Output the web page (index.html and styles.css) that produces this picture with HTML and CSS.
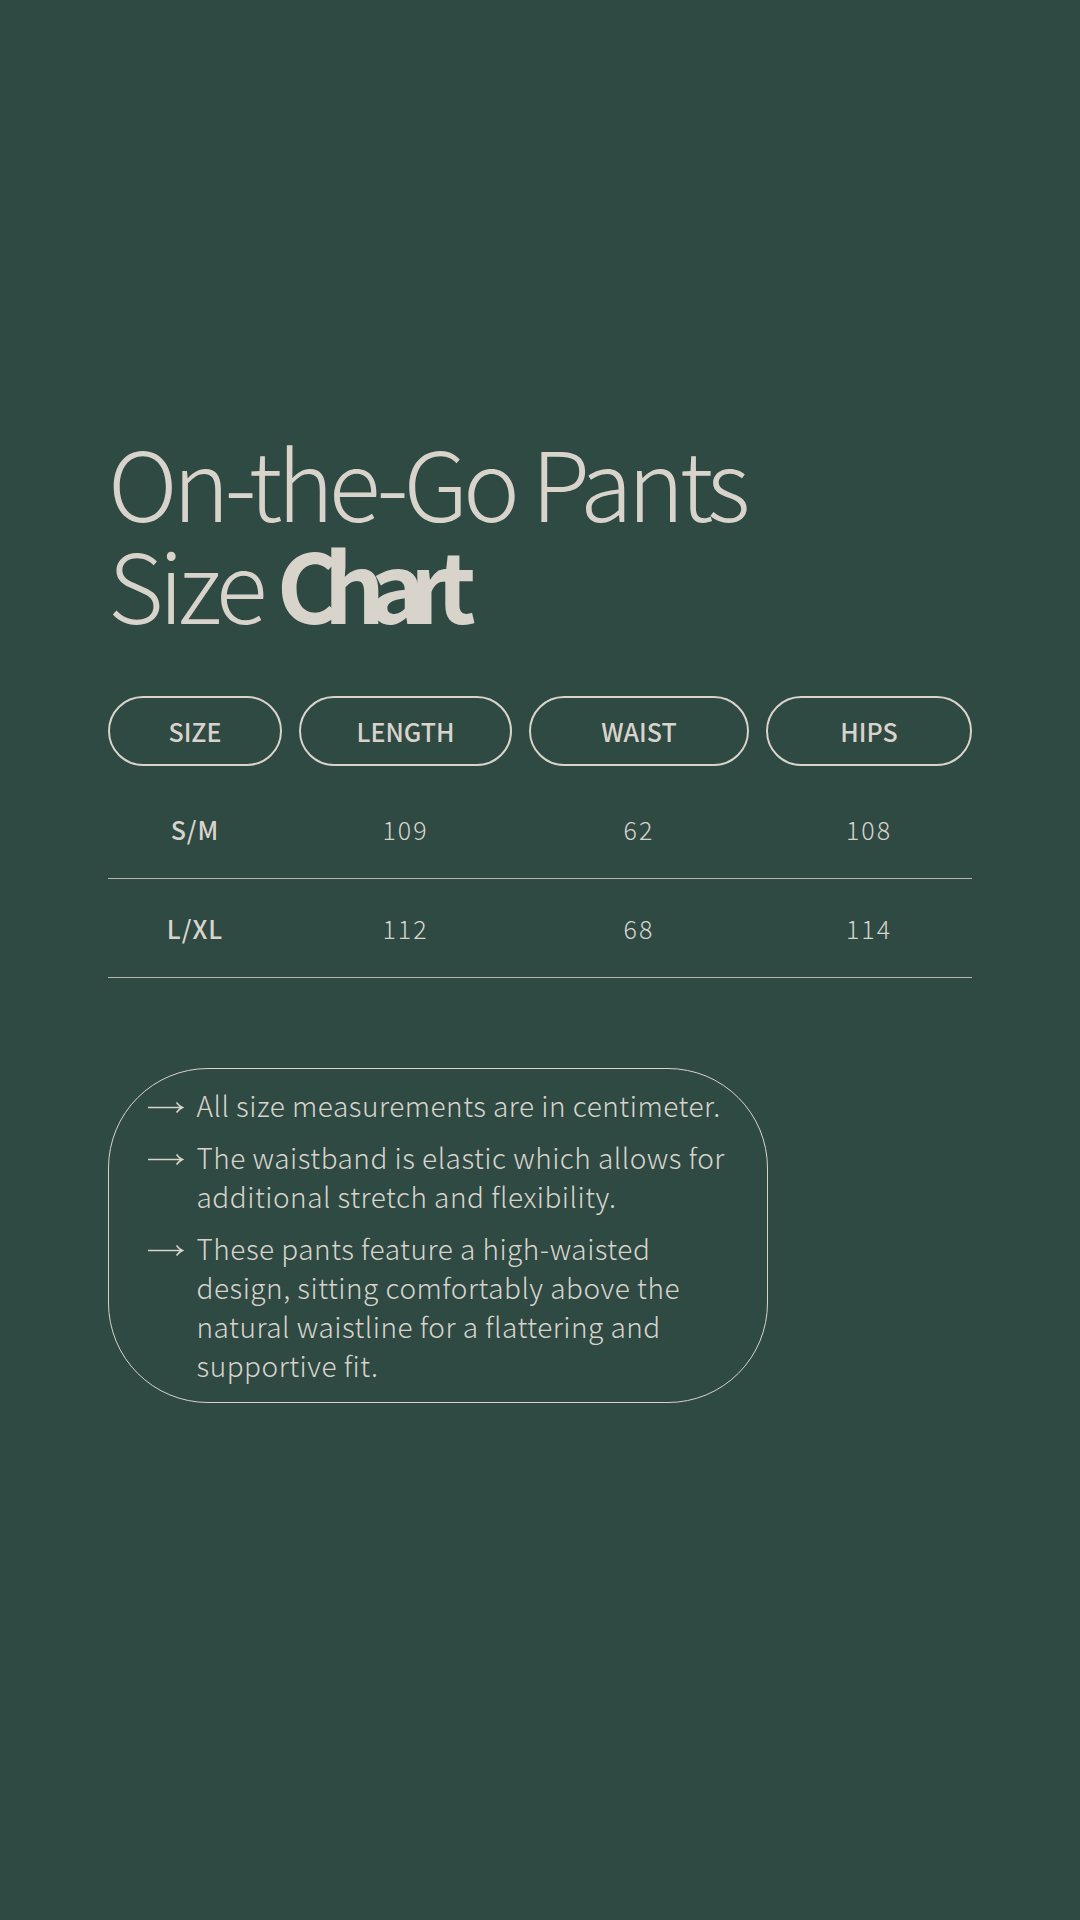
FILE: index.html
```html
<!DOCTYPE html>
<html lang="en">
<head>
<meta charset="utf-8">
<title>On-the-Go Pants Size Chart</title>
<link rel="stylesheet" href="styles.css">
</head>
<body>
<main class="page">
  <h1 class="title"><span class="line">On-the-Go Pants</span><span class="line">Size <b>Chart</b></span></h1>

  <section class="chart">
    <div class="grid head">
      <div class="pill">SIZE</div>
      <div class="pill">LENGTH</div>
      <div class="pill">WAIST</div>
      <div class="pill">HIPS</div>
    </div>
    <div class="grid row">
      <div class="size">S/M</div>
      <div class="num">109</div>
      <div class="num">62</div>
      <div class="num">108</div>
    </div>
    <div class="grid row">
      <div class="size">L/XL</div>
      <div class="num">112</div>
      <div class="num">68</div>
      <div class="num">114</div>
    </div>
  </section>

  <section class="notes">
    <div class="note">
      <svg class="arrow" viewBox="0 0 36 14" width="36" height="14"><path d="M0 7.5H34.5M28.5 2.5Q31 6 34.5 7.5Q31 9 28.5 12.5"/></svg>
      <p>All size measurements are in centimeter.</p>
    </div>
    <div class="note">
      <svg class="arrow" viewBox="0 0 36 14" width="36" height="14"><path d="M0 7.5H34.5M28.5 2.5Q31 6 34.5 7.5Q31 9 28.5 12.5"/></svg>
      <p>The waistband is elastic which allows for<br>additional stretch and flexibility.</p>
    </div>
    <div class="note">
      <svg class="arrow" viewBox="0 0 36 14" width="36" height="14"><path d="M0 7.5H34.5M28.5 2.5Q31 6 34.5 7.5Q31 9 28.5 12.5"/></svg>
      <p>These pants feature a high-waisted<br>design, sitting comfortably above the<br>natural waistline for a flattering and<br>supportive fit.</p>
    </div>
  </section>
</main>
</body>
</html>
```

FILE: styles.css
```css
html, body {
  margin: 0;
  padding: 0;
}

body {
  background: #2f4943;
  color: #d8d4cc;
  font-family: "Noto Sans CJK KR", "Noto Sans", sans-serif;
}

.page {
  width: 1080px;
  height: 1920px;
  box-sizing: border-box;
  padding: 430px 108px 0;
}

.title {
  margin: 0;
  font-size: 96px;
  line-height: 102px;
  font-weight: 300;
  letter-spacing: -5px;
}

.title .line {
  display: block;
  height: 102px;
}

.title b {
  font-weight: 700;
  letter-spacing: -16px;
  margin-left: -2px;
}

.chart {
  margin-top: 62px;
  width: 864px;
}

.grid {
  display: grid;
  grid-template-columns: 174px 213px 220px 206px;
  column-gap: 17px;
}

.pill {
  height: 70px;
  box-sizing: border-box;
  border: 2px solid #d8d4cc;
  border-radius: 35px;
  display: flex;
  align-items: center;
  justify-content: center;
  font-size: 25px;
  font-weight: 500;
}

.row {
  height: 98px;
  align-items: center;
  text-align: center;
  border-bottom: 1.5px solid rgba(216, 212, 204, 0.8);
  font-size: 25px;
}

.head + .row {
  margin-top: 14px;
}

.size {
  font-weight: 500;
  letter-spacing: 1px;
}

.num {
  font-weight: 300;
  letter-spacing: 2px;
}

.notes {
  margin-top: 90px;
  width: 660px;
  box-sizing: border-box;
  border: 1.5px solid #d8d4cc;
  border-radius: 100px;
  padding: 17px 20px 17px 38.5px;
  display: flex;
  flex-direction: column;
  gap: 13px;
}

.note {
  display: flex;
  gap: 13px;
  align-items: flex-start;
}

.arrow {
  flex: none;
  margin-top: 14px;
  fill: none;
  stroke: #d8d4cc;
  stroke-width: 1.5;
}

.note p {
  margin: 0;
  font-size: 28px;
  line-height: 39px;
  font-weight: 300;
  letter-spacing: 0.5px;
  white-space: nowrap;
}
```
